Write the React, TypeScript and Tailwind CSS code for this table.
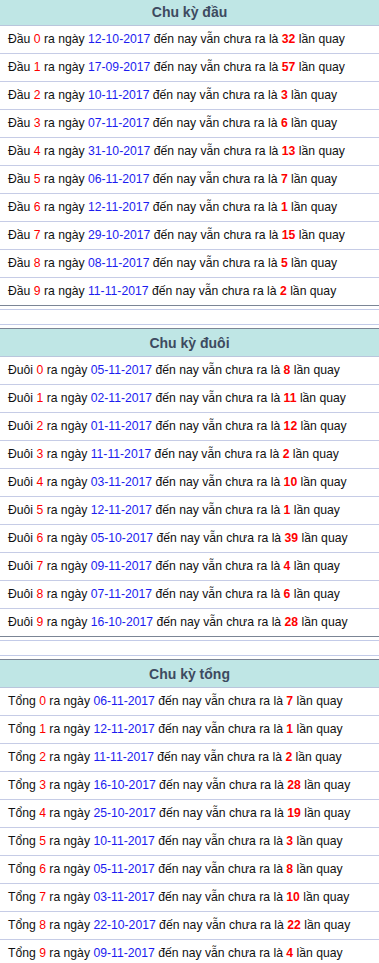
import React from 'react';

interface CycleRow {
  num: number;
  date: string;
  count: number;
}

interface CycleSection {
  title: string;
  label: string;
  rows: CycleRow[];
}

const sections: CycleSection[] = [
  {
    title: 'Chu kỳ đầu',
    label: 'Đầu',
    rows: [
      { num: 0, date: '12-10-2017', count: 32 },
      { num: 1, date: '17-09-2017', count: 57 },
      { num: 2, date: '10-11-2017', count: 3 },
      { num: 3, date: '07-11-2017', count: 6 },
      { num: 4, date: '31-10-2017', count: 13 },
      { num: 5, date: '06-11-2017', count: 7 },
      { num: 6, date: '12-11-2017', count: 1 },
      { num: 7, date: '29-10-2017', count: 15 },
      { num: 8, date: '08-11-2017', count: 5 },
      { num: 9, date: '11-11-2017', count: 2 },
    ],
  },
  {
    title: 'Chu kỳ đuôi',
    label: 'Đuôi',
    rows: [
      { num: 0, date: '05-11-2017', count: 8 },
      { num: 1, date: '02-11-2017', count: 11 },
      { num: 2, date: '01-11-2017', count: 12 },
      { num: 3, date: '11-11-2017', count: 2 },
      { num: 4, date: '03-11-2017', count: 10 },
      { num: 5, date: '12-11-2017', count: 1 },
      { num: 6, date: '05-10-2017', count: 39 },
      { num: 7, date: '09-11-2017', count: 4 },
      { num: 8, date: '07-11-2017', count: 6 },
      { num: 9, date: '16-10-2017', count: 28 },
    ],
  },
  {
    title: 'Chu kỳ tổng',
    label: 'Tổng',
    rows: [
      { num: 0, date: '06-11-2017', count: 7 },
      { num: 1, date: '12-11-2017', count: 1 },
      { num: 2, date: '11-11-2017', count: 2 },
      { num: 3, date: '16-10-2017', count: 28 },
      { num: 4, date: '25-10-2017', count: 19 },
      { num: 5, date: '10-11-2017', count: 3 },
      { num: 6, date: '05-11-2017', count: 8 },
      { num: 7, date: '03-11-2017', count: 10 },
      { num: 8, date: '22-10-2017', count: 22 },
      { num: 9, date: '09-11-2017', count: 4 },
    ],
  },
];

const Section: React.FC<{ section: CycleSection }> = ({ section }) => (
  <div>
    <div className="border-t border-[#7b8595]">
      <div className="h-[27px] bg-[#bfe6e5] flex items-center justify-center pt-px text-[14px] font-bold text-[#3d4a60]">
        {section.title}
      </div>
      <div className="h-px bg-[#b9c6dc]" />
    </div>
    {section.rows.map((row, i) => (
      <div
        key={row.num}
        className={`h-[28px] flex items-center pl-2 pb-px text-[12.2px] text-[#111] border-b ${
          i === section.rows.length - 1 ? 'border-[#7b8595]' : 'border-[#c6cce6]'
        }`}
      >
        <span className="whitespace-pre">
          {section.label} <span className="text-[#ff0000]">{row.num}</span> ra ngày{' '}
          <span className="text-[#1c1cf0]">{row.date}</span> đến nay vẫn chưa ra là{' '}
          <span className="text-[#ff0000] font-bold">{row.count}</span> lần quay
        </span>
      </div>
    ))}
  </div>
);

const App: React.FC = () => {
  return (
    <div className="w-[379px] h-[963px] overflow-hidden bg-white font-['Liberation_Sans','Noto_Sans_CJK_SC',sans-serif]">
      <div className="-mt-[3px]">
        {sections.map((section, i) => (
          <React.Fragment key={section.title}>
            {i > 0 && (
              <div className="py-[3px]">
                <div className="h-[16px] border-y border-[#c3cbe8]" />
              </div>
            )}
            <Section section={section} />
          </React.Fragment>
        ))}
      </div>
    </div>
  );
};

export default App;
